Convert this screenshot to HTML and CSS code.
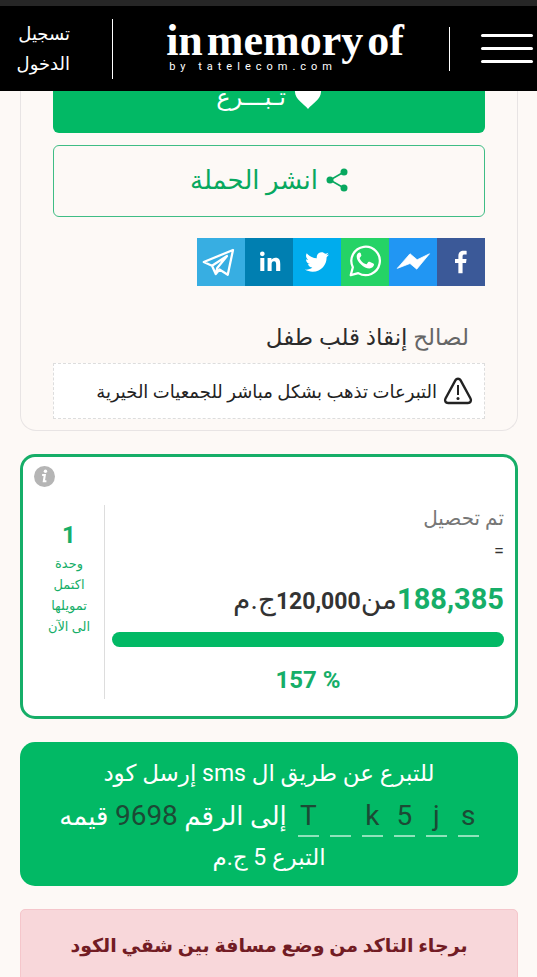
FILE: index.html
```html
<!DOCTYPE html>
<html lang="ar" dir="rtl">
<head>
    <meta charset="UTF-8">
    <meta name="viewport" content="width=device-width, initial-scale=1.0">
    <title>in memory of</title>
    <link rel="stylesheet" href="styles.css">
</head>
<body>
    <header class="header">
        <button class="menu-btn" type="button" aria-label="القائمة">
            <span class="menu-line"></span>
            <span class="menu-line"></span>
            <span class="menu-line"></span>
        </button>
        <a class="logo" href="#" dir="ltr">
            <span class="logo-name"><span>in</span><span>memory</span><span>of</span></span>
            <span class="logo-by">by tatelecom.com</span>
        </a>
        <a class="login" href="#">تسجيل<br>الدخول</a>
    </header>

    <main class="container">
        <!-- Campaign actions -->
        <section class="campaign">
            <button class="btn btn-donate" type="button">
                <svg class="icon-heart" viewBox="0 0 28 26"><path d="M14 25C10 20 1 15 1 8a6.500 6.500 0 0 1 13-2 6.500 6.500 0 0 1 13 2c0 7-9 12-13 17z" fill="#fff"/></svg>
                <span>تـبـــرع</span>
            </button>
            <button class="btn btn-share" type="button">
                <svg class="icon-share" viewBox="0 0 22 24"><path d="M18 4 4 12l14 8" fill="none" stroke="#08a85f" stroke-width="1.600"/><g fill="#08a85f"><circle cx="18" cy="4" r="3.500"/><circle cx="4" cy="12" r="3.500"/><circle cx="18" cy="20" r="3.500"/></g></svg>
                <span>انشر الحملة</span>
            </button>

            <div class="social">
                <a class="social-link facebook" href="#" aria-label="Facebook">
                    <svg viewBox="0 0 64 64"><path d="M34.100 47V33.300h4.600l.7-5.300h-5.300v-3.400c0-1.500.4-2.600 2.600-2.600h2.800v-4.800c-.5-.1-2.200-.2-4.100-.2-4.100 0-6.900 2.500-6.900 7V28H24v5.300h4.500V47h5.600z" fill="#fff"/></svg>
                </a>
                <a class="social-link messenger" href="#" aria-label="Messenger">
                    <svg viewBox="0 0 64 64"><path d="M11 40.500 28 21l9.500 8L54 21 37 41.500 28 34z" fill="#fff" stroke="#fff" stroke-width="1" stroke-linejoin="round"/></svg>
                </a>
                <a class="social-link whatsapp" href="#" aria-label="WhatsApp">
                    <svg viewBox="0 0 64 64"><path d="m13 49.500 2.800-10.500A19 19 0 1 1 23 46.800z" fill="none" stroke="#fff" stroke-width="3" stroke-linejoin="round"/><path d="M26.500 20.500c-.7-1.300-1.700-1.200-2.800-1-1.500.7-2.800 2.600-2.800 5 0 7.500 10 16 17 16 3 0 6-2.300 6.100-4.800.1-.8-.2-1.200-.9-1.600l-5-2.400c-.7-.3-1.200-.2-1.700.4l-2 2.400c-.5.5-1 .5-1.600.3-3.500-1.600-6-4-7.700-7.300-.3-.7-.1-1.100.3-1.500l1.500-1.900c.3-.4.3-.8.1-1.400z" fill="#fff"/></svg>
                </a>
                <a class="social-link twitter" href="#" aria-label="Twitter">
                    <svg viewBox="0 0 64 64"><path d="M48 22.100c-1.200.5-2.400.9-3.800 1 1.400-.8 2.400-2.100 2.900-3.600-1.300.8-2.700 1.300-4.200 1.600C41.700 19.800 40 19 38.200 19c-3.600 0-6.600 2.900-6.600 6.600 0 .5.1 1 .2 1.500-5.500-.3-10.300-2.900-13.500-6.900-.6 1-.9 2.100-.9 3.300 0 2.300 1.200 4.300 2.900 5.500-1.100 0-2.100-.3-3-.8v.1c0 3.200 2.300 5.800 5.300 6.400-.6.1-1.100.2-1.700.2-.4 0-.8 0-1.200-.1.800 2.600 3.300 4.500 6.100 4.600-2.200 1.800-5.100 2.800-8.200 2.800-.5 0-1.100 0-1.600-.1 2.900 1.900 6.400 2.900 10.100 2.900 12.100 0 18.700-10 18.700-18.700v-.8c1.300-1 2.400-2.200 3.200-3.400z" fill="#fff"/></svg>
                </a>
                <a class="social-link linkedin" href="#" aria-label="LinkedIn">
                    <svg viewBox="0 0 64 64"><path d="M20.400 44h5.400V26.600h-5.400V44zm2.700-26a3.100 3.100 0 1 0 0 6.200 3.100 3.100 0 0 0 0-6.200zm17.400 8.200c-2.600 0-4.400 1.400-5.100 2.800h-.1v-2.400h-5.200V44h5.400v-8.600c0-2.300.4-4.500 3.200-4.500 2.800 0 2.800 2.600 2.800 4.600V44H47v-9.500c0-4.700-1-8.300-6.500-8.300z" fill="#fff"/></svg>
                </a>
                <a class="social-link telegram" href="#" aria-label="Telegram">
                    <svg viewBox="0 0 64 64"><path d="M48 16 9 32l11 5 5 11 5-6 11 7zM20 37l20-13-13 16-2 8" fill="none" stroke="#fff" stroke-width="3" stroke-linejoin="round" stroke-linecap="round"/></svg>
                </a>
            </div>

            <p class="charity"><span>لصالح</span> <strong>إنقاذ قلب طفل</strong></p>

            <div class="notice">
                <svg class="icon-warning" viewBox="0 0 30 30"><path d="M12.500 4.200 2.500 22.500c-1.200 2.300 0 4.500 2.600 4.500h19.800c2.600 0 3.800-2.200 2.600-4.500l-10-18.300c-1.100-2-3.900-2-5 0z" fill="none" stroke="#222" stroke-width="2.400"/><path d="M15 9v10" stroke="#222" stroke-width="2"/><circle cx="15" cy="22.500" r="1.500" fill="#222"/></svg>
                <span>التبرعات تذهب بشكل مباشر للجمعيات الخيرية</span>
            </div>
        </section>

        <!-- Collected amount -->
        <section class="progress-card">
            <button class="info-btn" type="button" aria-label="معلومات">
                <svg viewBox="0 0 22 22"><circle cx="11" cy="11" r="11" fill="#b5b5b5"/><circle cx="12" cy="5.500" r="1.800" fill="#fff"/><path d="M8.500 9.500h2.800l-1 6.500h2.700" fill="none" stroke="#fff" stroke-width="2.200"/></svg>
            </button>
            <div class="progress-body">
                <div class="collected">
                    <p class="collected-label">تم تحصيل</p>
                    <p class="collected-equal">=</p>
                    <p class="amount"><strong class="amount-paid">188,385</strong><span class="amount-word">من</span><strong>120,000</strong><span class="amount-word">ج.م</span></p>
                    <div class="bar" role="progressbar" aria-label="تم تحصيل" aria-valuenow="100">
                        <div class="bar-fill" style="width: 100%"></div>
                    </div>
                    <p class="percent" dir="ltr">157 %</p>
                </div>
                <div class="units">
                    <strong class="units-count">1</strong>
                    <p>وحدة<br>اكتمل<br>تمويلها<br>الى الآن</p>
                </div>
            </div>
        </section>

        <!-- Donation by SMS -->
        <section class="sms">
            <p>للتبرع عن طريق ال sms إرسل كود</p>
            <p class="sms-row">
                <span class="code" dir="ltr"><span>T</span><span></span><span>k</span><span>5</span><span>j</span><span>s</span></span>
                <span>إلى الرقم <span class="sms-number">9698</span> قيمه</span>
            </p>
            <p>التبرع 5 ج.م</p>
        </section>

        <div class="alert" role="alert">برجاء التاكد من وضع مسافة بين شقي الكود</div>
    </main>
</body>
</html>
```

FILE: styles.css
```css
/* ===== RESET & BASE STYLES ===== */
* {
    margin: 0;
    padding: 0;
    box-sizing: border-box;
}

body {
    font-family: Roboto, 'DejaVu Sans', sans-serif;
    background-color: #fdf9f6;
    color: #333;
    overflow-x: hidden;
}

a {
    color: inherit;
    text-decoration: none;
}

button {
    font-family: inherit;
    cursor: pointer;
}

svg {
    display: block;
}

/* ===== HEADER ===== */
.header {
    position: fixed;
    top: 0;
    left: 0;
    right: 0;
    z-index: 10;
    height: 91px;
    padding: 0 4px 0 14px;
    display: flex;
    align-items: center;
    justify-content: space-between;
    background: #000;
    border-top: 6px solid #262626;
    color: #fff;
}

.menu-btn {
    width: 84px;
    height: 44px;
    display: flex;
    flex-direction: column;
    justify-content: center;
    gap: 10px;
    background: none;
    border: none;
    border-left: 1px solid #fff;
}

.menu-line {
    width: 52px;
    height: 3px;
    border-radius: 2px;
    background: #fff;
}

.logo {
    margin-left: 8px;
    display: flex;
    flex-direction: column;
}

.logo-name {
    display: flex;
    gap: 4px;
    font-family: 'Liberation Serif', serif;
    font-size: 44px;
    font-weight: bold;
    line-height: 36px;
}

.logo-by {
    padding-left: 3px;
    font-size: 11px;
    line-height: 16px;
    letter-spacing: 5px;
}

.login {
    width: 99px;
    padding: 0 42px 0 0;
    border-right: 1px solid #fff;
    font-size: 18px;
    line-height: 30px;
}

/* ===== LAYOUT STYLES ===== */
.container {
    padding: 0 19px 0 20px;
    display: flex;
    flex-direction: column;
    gap: 23px;
}

/* ===== CAMPAIGN ===== */
.campaign {
    padding: 61px 32px 11px;
    border: 1px solid #e8e4e4;
    border-top: none;
    border-radius: 0 0 16px 16px;
}

.btn {
    width: 100%;
    height: 72px;
    display: flex;
    align-items: center;
    justify-content: center;
    gap: 8px;
    border-radius: 6px;
    font-size: 26px;
}

.btn-donate {
    background: #02b965;
    border: none;
    color: #fff;
    font-size: 24px;
}

.btn-share {
    margin-top: 12px;
    padding-bottom: 3px;
    background: none;
    border: 1px solid #3fbd85;
    color: #08a85f;
}

.icon-heart {
    width: 28px;
    height: 26px;
}

.icon-share {
    width: 22px;
    height: 24px;
}

.social {
    margin-top: 21px;
    display: flex;
}

.social-link {
    width: 48px;
    height: 48px;
}

.facebook { background: #3b5998; }
.messenger { background: #2196f3; }
.whatsapp { background: #25d366; }
.twitter { background: #00aced; }
.linkedin { background: #007fb1; }
.telegram { background: #37aee2; }

.charity {
    padding: 37px 16px 10px;
    font-size: 23px;
    line-height: 30px;
    color: #666;
}

.charity strong {
    font-weight: normal;
    color: #2b2b2b;
}

.notice {
    min-height: 56px;
    padding: 0 11px;
    display: flex;
    align-items: center;
    gap: 6px;
    background: #fff;
    border: 1px dashed #ddd;
    font-size: 18px;
    color: #222;
}

.icon-warning {
    flex: none;
    width: 30px;
    height: 30px;
}

/* ===== COLLECTED AMOUNT ===== */
.progress-card {
    padding: 9px 11px 17px 11px;
    background: #fff;
    border: 3px solid #16ae68;
    border-radius: 15px;
}

.info-btn {
    display: block;
    margin-right: auto;
    width: 21px;
    height: 21px;
    background: none;
    border: none;
}

.progress-body {
    margin-top: 18px;
    display: flex;
}

.collected {
    flex: 1;
    padding-left: 7px;
    border-left: 1px solid #ddd;
}

.collected-label {
    font-size: 20px;
    line-height: 26px;
    color: #777;
}

.collected-equal {
    font-size: 18px;
    line-height: 40px;
}

.amount {
    height: 56px;
    display: flex;
    align-items: baseline;
    font-size: 23px;
    line-height: 56px;
}

.amount-paid {
    font-size: 29px;
    color: #16ae68;
}

.amount-word {
    font-size: 28px;
}

.bar {
    margin-top: 5px;
    height: 15px;
    background: #eee;
    border-radius: 8px;
    overflow: hidden;
}

.bar-fill {
    height: 100%;
    background: #02b965;
}

.percent {
    padding-top: 14px;
    font-size: 24px;
    font-weight: bold;
    line-height: 38px;
    text-align: center;
    color: #16ae68;
}

.units {
    width: 70px;
    padding-top: 12px;
    text-align: center;
    font-size: 13px;
    line-height: 21px;
    color: #16ae68;
}

.units-count {
    display: block;
    font-size: 24px;
    line-height: 36px;
}

/* ===== SMS ===== */
.sms {
    padding: 11px 24px 7px;
    background: #02b965;
    border-radius: 15px;
    color: #fff;
    font-size: 23px;
    line-height: 42px;
    text-align: center;
}

.sms-row {
    display: flex;
    justify-content: center;
    align-items: center;
    gap: 11px;
    font-size: 26px;
    white-space: nowrap;
}

.code {
    display: flex;
    gap: 11px;
}

.code span {
    width: 21px;
    height: 42px;
    border-bottom: 2px solid #8fe3bb;
}

.code,
.sms-number {
    font-size: 28px;
    color: #1c4a35;
}

.sms-number {
    line-height: 28px;
}

/* ===== ALERT ===== */
.alert {
    padding: 18px 20px;
    background: #f8d7da;
    border: 1px solid #f5c6cb;
    border-radius: 5px;
    font-size: 19px;
    font-weight: bold;
    line-height: 36px;
    text-align: center;
    color: #721c24;
}
```
